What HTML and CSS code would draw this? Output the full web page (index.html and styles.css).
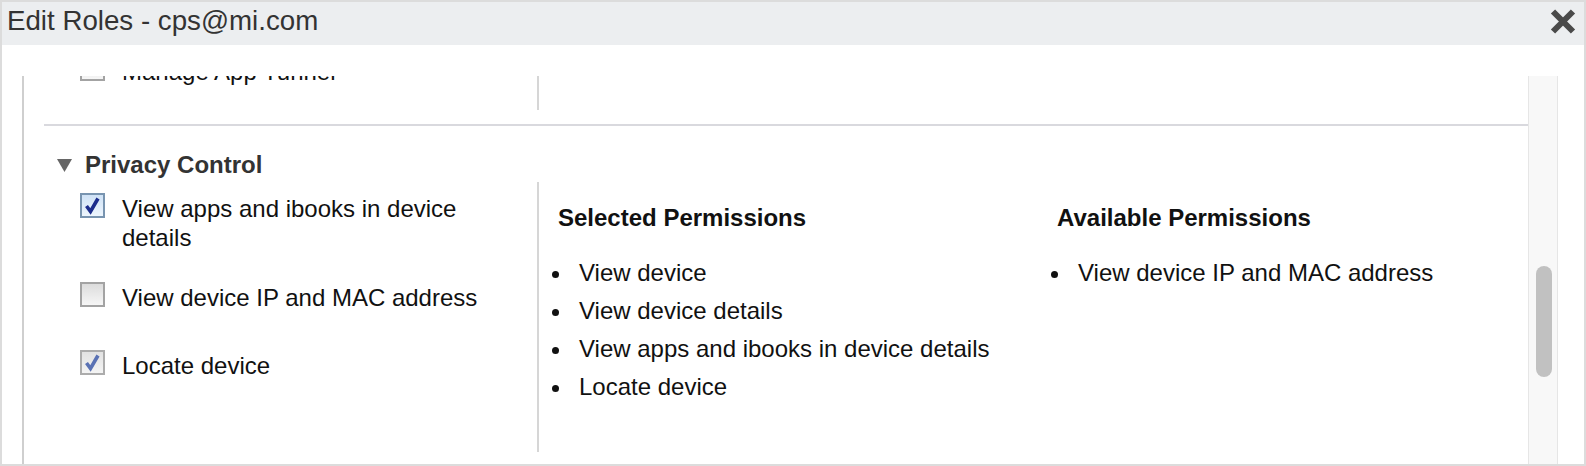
FILE: index.html
```html
<!DOCTYPE html>
<html lang="en">
<head>
    <meta charset="UTF-8">
    <meta name="viewport" content="width=device-width, initial-scale=1.0">
    <title>Edit Roles</title>
    <link rel="stylesheet" href="styles.css">
</head>
<body>
    <div class="dialog">
        <div class="titlebar">
            <span class="title">Edit Roles - cps@mi.com</span>
            <button class="close" aria-label="Close">
                <svg width="26" height="25" viewBox="0 0 26 25">
                    <path d="M3 2.5 L23 22.5 M23 2.5 L3 22.5" stroke="#4a4a4a" stroke-width="6" fill="none"/>
                </svg>
            </button>
        </div>
        <div class="dialog-body">
            <div class="viewport">
                <div class="panel">
                    <section class="role-group clipped">
                        <div class="perm-grid">
                            <div class="perm-options">
                                <label class="perm">
                                    <span class="box"></span>
                                    <span>Manage App Tunnel</span>
                                </label>
                            </div>
                            <div class="perm-list selected"></div>
                            <div class="perm-list"></div>
                        </div>
                    </section>

                    <section class="role-group">
                        <h2 class="group-title">
                            <svg class="caret" width="15" height="13" viewBox="0 0 15 13">
                                <polygon points="0,0 15,0 7.5,13" fill="#666"/>
                            </svg>
                            Privacy Control
                        </h2>
                        <div class="perm-grid">
                            <div class="perm-options">
                                <label class="perm two-line">
                                    <span class="box checked">
                                        <svg width="21" height="21" viewBox="0 0 21 21"><path d="M4.5 11 L8.5 16.5 L16 3.5" stroke="#1b2c8c" stroke-width="3.6" fill="none"/></svg>
                                    </span>
                                    <span>View apps and ibooks in device details</span>
                                </label>
                                <label class="perm">
                                    <span class="box"></span>
                                    <span>View device IP and MAC address</span>
                                </label>
                                <label class="perm">
                                    <span class="box locked">
                                        <svg width="21" height="21" viewBox="0 0 21 21"><path d="M4.5 11 L8.5 16.5 L16 3.5" stroke="#5a72b4" stroke-width="3.6" fill="none"/></svg>
                                    </span>
                                    <span>Locate device</span>
                                </label>
                            </div>
                            <div class="perm-list selected">
                                <h3>Selected Permissions</h3>
                                <ul>
                                    <li>View device</li>
                                    <li>View device details</li>
                                    <li>View apps and ibooks in device details</li>
                                    <li>Locate device</li>
                                </ul>
                            </div>
                            <div class="perm-list">
                                <h3>Available Permissions</h3>
                                <ul>
                                    <li>View device IP and MAC address</li>
                                </ul>
                            </div>
                        </div>
                    </section>
                </div>
            </div>
            <div class="scrollbar">
                <div class="thumb"></div>
            </div>
        </div>
    </div>
</body>
</html>
```

FILE: styles.css
```css
* {
    box-sizing: border-box;
}

body {
    margin: 0;
    font-family: "Liberation Sans", Arial, Helvetica, sans-serif;
    color: #111;
    background-color: #fff;
}

.dialog {
    width: 1586px;
    height: 466px;
    border: 2px solid #dcdcdc;
    display: flex;
    flex-direction: column;
    overflow: hidden;
}

.titlebar {
    height: 43px;
    flex: none;
    display: flex;
    align-items: flex-start;
    justify-content: space-between;
    background-color: #eceef0;
    padding-left: 5px;
}

.title {
    font-size: 27.7px;
    line-height: 37px;
    color: #333;
}

.close {
    margin: 7px 8px 0 0;
    padding: 0;
    border: none;
    background: none;
    cursor: pointer;
    filter: blur(0.4px);
}

.close svg {
    display: block;
}

.dialog-body {
    flex: 1;
    display: flex;
    padding: 31px 26px 0 0;
    min-height: 0;
}

.viewport {
    flex: 1;
    overflow: hidden;
}

.panel {
    margin: -31px 0 0 20px;
    border-left: 2px solid #cfcfcf;
    min-height: 500px;
}

.role-group {
    margin-left: 20px;
    padding-bottom: 14px;
    border-top: 2px solid #d9d9de;
}

.role-group.clipped {
    border-top: none;
}

.group-title {
    margin: 0 0 3px;
    padding: 25px 0 0 13px;
    display: flex;
    align-items: center;
    gap: 13px;
    font-size: 24px;
    line-height: 28px;
    color: #333;
}

.caret {
    filter: blur(0.5px);
}

.perm-grid {
    display: grid;
    grid-template-columns: 493px 501px 1fr;
    min-height: 270px;
}

.clipped .perm-grid {
    min-height: 65px;
}

.perm-options {
    padding: 12px 20px 0 36px;
}

.perm {
    display: flex;
    align-items: flex-start;
    gap: 17px;
    font-size: 24px;
    line-height: 29px;
    margin-bottom: 39px;
}

.perm.two-line {
    margin-bottom: 31px;
}

.perm:last-child {
    margin-bottom: 0;
}

.box {
    flex: none;
    width: 25px;
    height: 25px;
    margin-top: -1px;
    border: 2px solid #a3a3a3;
    background: linear-gradient(#dcdcdc, #f6f6f6);
}

.box svg {
    display: block;
}

.box.checked {
    border-color: #7894b0;
    background: linear-gradient(#cfe2f6, #edf5fd);
}

.box.locked {
    border-color: #acacac;
    background: linear-gradient(#e2e2e2, #f4f4f4);
}

.perm-list {
    padding: 21px 20px 0 19px;
}

.perm-list.selected {
    border-left: 2px solid #d6d6d6;
}

.perm-list h3 {
    margin: 0;
    font-size: 24px;
    line-height: 29px;
    color: #111;
}

.perm-list ul {
    margin: 22px 0 0;
    padding-left: 15px;
}

.perm-list li {
    padding-left: 6px;
    font-size: 24px;
    line-height: 38px;
}

.scrollbar {
    flex: none;
    width: 30px;
    background-color: #f8f8f8;
    border-left: 1px solid #e6e6e6;
    border-right: 1px solid #e6e6e6;
    padding-top: 190px;
}

.thumb {
    width: 16px;
    height: 111px;
    margin-left: 7px;
    border-radius: 8px;
    background-color: #c1c1c1;
}
```
